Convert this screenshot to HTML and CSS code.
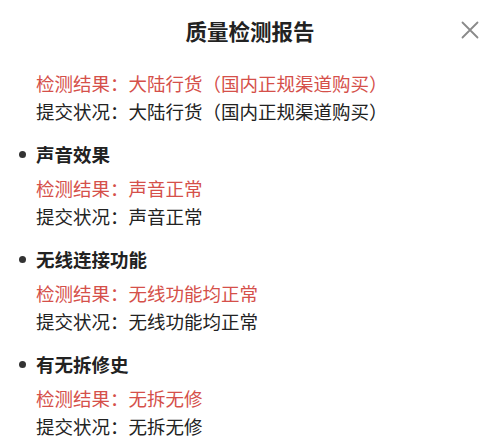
FILE: index.html
```html
<!DOCTYPE html>
<html lang="zh">
<head>
<meta charset="utf-8">
<link rel="stylesheet" href="styles.css">
</head>
<body>
<div class="sheet">
  <div class="header">
    <div class="title">质量检测报告</div>
    <div class="close">
      <svg width="18" height="18" viewBox="0 0 18 18"><path d="M1.5 1.5 L16.5 16.5 M16.5 1.5 L1.5 16.5" stroke="#8a8a8a" stroke-width="1.8" stroke-linecap="round" fill="none"/></svg>
    </div>
  </div>
  <div class="list">
    <div class="section first">
      <div class="line red">检测结果：大陆行货（国内正规渠道购买）</div>
      <div class="line">提交状况：大陆行货（国内正规渠道购买）</div>
    </div>
    <div class="section">
      <div class="head"><span class="dot"></span><span>声音效果</span></div>
      <div class="line red">检测结果：声音正常</div>
      <div class="line">提交状况：声音正常</div>
    </div>
    <div class="section">
      <div class="head"><span class="dot"></span><span>无线连接功能</span></div>
      <div class="line red">检测结果：无线功能均正常</div>
      <div class="line">提交状况：无线功能均正常</div>
    </div>
    <div class="section">
      <div class="head"><span class="dot"></span><span>有无拆修史</span></div>
      <div class="line red">检测结果：无拆无修</div>
      <div class="line">提交状况：无拆无修</div>
    </div>
  </div>
</div>
</body>
</html>
```
FILE: styles.css
```css
html, body {
  margin: 0;
  padding: 0;
  background: #ffffff;
}
body {
  font-family: "Noto Sans CJK SC", "Noto Sans", sans-serif;
  color: #222222;
  width: 500px;
  height: 448px;
  overflow: hidden;
  text-spacing-trim: space-all;
}
.sheet {
  display: flex;
  flex-direction: column;
}
.header {
  height: 62px;
  display: flex;
  align-items: center;
  justify-content: center;
  position: relative;
}
.title {
  font-size: 21.5px;
  font-weight: bold;
  color: #222;
  line-height: 28px;
}
.close {
  position: absolute;
  right: 21px;
  top: 21px;
  width: 18px;
  height: 18px;
}
.close svg { display: block; }
.list {
  padding: 7px 0 0 36px;
  display: flex;
  flex-direction: column;
}
.section {
  display: flex;
  flex-direction: column;
  margin-top: 15px;
}
.section.first { margin-top: 0; }
.line {
  font-size: 18.5px;
  line-height: 28px;
  white-space: nowrap;
}
.red { color: #d5504a; }
.head {
  display: flex;
  align-items: center;
  gap: 10px;
  margin-left: -17px;
  font-size: 18.5px;
  line-height: 28px;
  font-weight: bold;
  color: #222;
  margin-bottom: 6px;
}
.dot {
  width: 7px;
  height: 7px;
  border-radius: 50%;
  background: #333;
  flex: none;
}
```
